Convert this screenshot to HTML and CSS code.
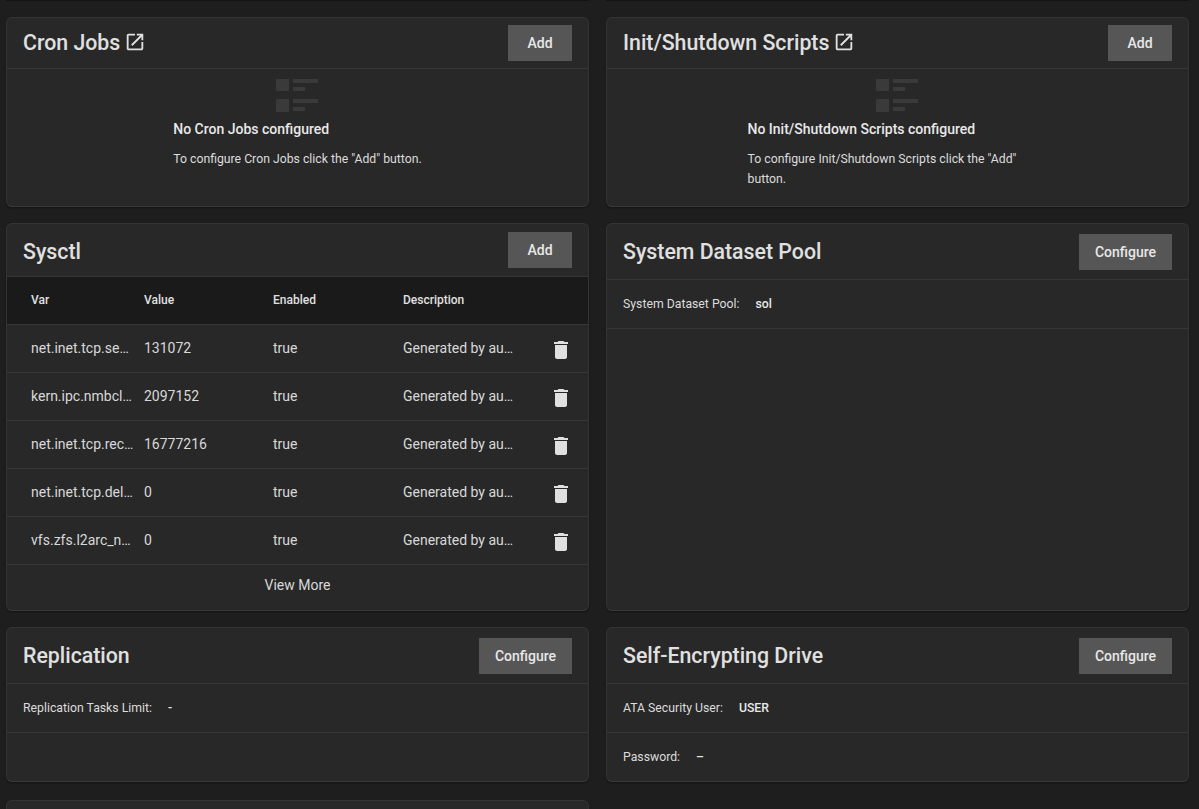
FILE: index.html
```html
<!DOCTYPE html>
<html lang="en">
  <head>
    <meta charset="UTF-8" />
    <meta name="viewport" content="width=device-width, initial-scale=1.0" />
    <title>Advanced Settings</title>
    <link rel="stylesheet" href="styles.css">
  </head>
  <body>
    <div class="top-edge">
      <span></span>
      <span></span>
    </div>
    <div class="cards">
      <section class="card">
        <header class="card-head head-short">
          <h2>Cron Jobs
            <svg class="link-icon" viewBox="0 0 24 24"><path d="M19 19H5V5h7V3H5c-1.11 0-2 .9-2 2v14c0 1.1.89 2 2 2h14c1.1 0 2-.9 2-2v-7h-2v7zM14 3v2h3.59l-9.83 9.83 1.41 1.41L19 6.41V10h2V3h-7z"/></svg>
          </h2>
          <button class="head-btn">Add</button>
        </header>
        <div class="empty">
          <svg class="empty-icon" viewBox="0 0 42 33"><path d="M0 0h13v12H0zM17 0h25v4H17zM17 8h12v4H17zM0 20h13v13H0zM17 20h25v4H17zM17 28h12v4H17z"/></svg>
          <div class="empty-text">
            <h3>No Cron Jobs configured</h3>
            <p>To configure Cron Jobs click the "Add" button.</p>
          </div>
        </div>
      </section>

      <section class="card">
        <header class="card-head head-short">
          <h2>Init/Shutdown Scripts
            <svg class="link-icon" viewBox="0 0 24 24"><path d="M19 19H5V5h7V3H5c-1.11 0-2 .9-2 2v14c0 1.1.89 2 2 2h14c1.1 0 2-.9 2-2v-7h-2v7zM14 3v2h3.59l-9.83 9.83 1.41 1.41L19 6.41V10h2V3h-7z"/></svg>
          </h2>
          <button class="head-btn">Add</button>
        </header>
        <div class="empty">
          <svg class="empty-icon" viewBox="0 0 42 33"><path d="M0 0h13v12H0zM17 0h25v4H17zM17 8h12v4H17zM0 20h13v13H0zM17 20h25v4H17zM17 28h12v4H17z"/></svg>
          <div class="empty-text">
            <h3>No Init/Shutdown Scripts configured</h3>
            <p>To configure Init/Shutdown Scripts click the "Add" button.</p>
          </div>
        </div>
      </section>

      <section class="card">
        <header class="card-head head-sysctl">
          <h2>Sysctl</h2>
          <button class="head-btn">Add</button>
        </header>
        <table class="sysctl-table">
          <thead>
            <tr>
              <th>Var</th>
              <th>Value</th>
              <th>Enabled</th>
              <th>Description</th>
              <th></th>
            </tr>
          </thead>
          <tbody>
            <tr>
              <td>net.inet.tcp.sendbuf_max</td>
              <td>131072</td>
              <td>true</td>
              <td>Generated by autotune</td>
              <td><svg class="trash" viewBox="0 0 24 24"><path d="M19 4h-3.5l-1-1h-5l-1 1H5v2h14V4zM6 19c0 1.1.9 2 2 2h8c1.1 0 2-.9 2-2V7H6v12z"/></svg></td>
            </tr>
            <tr>
              <td>kern.ipc.nmbclusters</td>
              <td>2097152</td>
              <td>true</td>
              <td>Generated by autotune</td>
              <td><svg class="trash" viewBox="0 0 24 24"><path d="M19 4h-3.5l-1-1h-5l-1 1H5v2h14V4zM6 19c0 1.1.9 2 2 2h8c1.1 0 2-.9 2-2V7H6v12z"/></svg></td>
            </tr>
            <tr>
              <td>net.inet.tcp.recvbuf_max</td>
              <td>16777216</td>
              <td>true</td>
              <td>Generated by autotune</td>
              <td><svg class="trash" viewBox="0 0 24 24"><path d="M19 4h-3.5l-1-1h-5l-1 1H5v2h14V4zM6 19c0 1.1.9 2 2 2h8c1.1 0 2-.9 2-2V7H6v12z"/></svg></td>
            </tr>
            <tr>
              <td>net.inet.tcp.delayed_ack</td>
              <td>0</td>
              <td>true</td>
              <td>Generated by autotune</td>
              <td><svg class="trash" viewBox="0 0 24 24"><path d="M19 4h-3.5l-1-1h-5l-1 1H5v2h14V4zM6 19c0 1.1.9 2 2 2h8c1.1 0 2-.9 2-2V7H6v12z"/></svg></td>
            </tr>
            <tr>
              <td>vfs.zfs.l2arc_noprefetch</td>
              <td>0</td>
              <td>true</td>
              <td>Generated by autotune</td>
              <td><svg class="trash" viewBox="0 0 24 24"><path d="M19 4h-3.5l-1-1h-5l-1 1H5v2h14V4zM6 19c0 1.1.9 2 2 2h8c1.1 0 2-.9 2-2V7H6v12z"/></svg></td>
            </tr>
          </tbody>
        </table>
        <div class="view-more">View More</div>
      </section>

      <section class="card">
        <header class="card-head">
          <h2>System Dataset Pool</h2>
          <button class="head-btn">Configure</button>
        </header>
        <div class="info-row"><span>System Dataset Pool:</span><strong>sol</strong></div>
      </section>

      <section class="card">
        <header class="card-head">
          <h2>Replication</h2>
          <button class="head-btn">Configure</button>
        </header>
        <div class="info-row"><span>Replication Tasks Limit:</span><strong>-</strong></div>
      </section>

      <section class="card">
        <header class="card-head">
          <h2>Self-Encrypting Drive</h2>
          <button class="head-btn">Configure</button>
        </header>
        <div class="info-row"><span>ATA Security User:</span><strong>USER</strong></div>
        <div class="info-row no-line"><span>Password:</span><strong>–</strong></div>
      </section>

      <section class="card"></section>
    </div>
  </body>
</html>
```

FILE: styles.css
```css
html,
body {
  height: 100%;
}

body {
  margin: 0;
  padding: 0 6px;
  background-color: #1e1e1e;
  color: #e0e0e0;
  font-family: Roboto, "Liberation Sans", sans-serif;
  font-size: 14px;
  overflow: hidden;
  box-sizing: border-box;
}

/* Bottom edge of the card scrolled out above the page */
.top-edge {
  display: grid;
  grid-template-columns: 583px 583px;
  column-gap: 17px;
  height: 1px;
}

.top-edge span {
  background-color: #141414;
}

.cards {
  display: grid;
  grid-template-columns: 583px 583px;
  grid-template-rows: 190px 388px 155px 60px;
  column-gap: 17px;
  row-gap: 16px;
  margin-top: 16px;
}

.card {
  background-color: #282828;
  border: 1px solid #343434;
  border-bottom-color: #3a3a3a;
  border-radius: 6px;
  box-shadow: 0 1px 2px rgba(0, 0, 0, 0.4);
  box-sizing: border-box;
  overflow: hidden;
}

.card:nth-child(7) {
  margin-top: 2px;
}

.card-head {
  display: flex;
  justify-content: space-between;
  align-items: center;
  height: 55px;
  padding: 0 16px;
  border-bottom: 1px solid #363636;
}

.head-short {
  height: 50px;
  align-items: flex-start;
}

.head-short h2 {
  height: 36px;
  margin-top: 6px;
}

.head-short .head-btn {
  margin-top: 7px;
}

.head-sysctl {
  height: 52px;
  align-items: flex-start;
}

.head-sysctl h2 {
  height: 36px;
  margin-top: 9px;
}

.head-sysctl .head-btn {
  margin-top: 8px;
}

h2 {
  display: flex;
  align-items: center;
  gap: 4px;
  margin: 0;
  font-size: 21.3px;
  font-weight: 500;
  color: #e0e0e0;
}

.link-icon {
  width: 22px;
  height: 22px;
  fill: #e0e0e0;
}

.head-btn {
  min-width: 64px;
  height: 36px;
  padding: 0 16px;
  background-color: #565656;
  color: #e8e8e8;
  border: none;
  font-family: Roboto, "Liberation Sans", sans-serif;
  font-size: 14px;
  font-weight: 500;
}

.empty {
  display: flex;
  flex-direction: column;
  align-items: center;
  padding-top: 10px;
}

.empty-icon {
  width: 42px;
  height: 33px;
  margin-right: 1px;
  fill: #3a3a3a;
}

.empty-text {
  max-width: 300px;
}

.empty-text h3 {
  margin: 7px 0 0;
  font-size: 14px;
  line-height: 20px;
  font-weight: 500;
  color: #e8e8e8;
}

.empty-text p {
  margin: 10px 0 0;
  font-size: 12.25px;
  line-height: 20px;
  color: #dcdcdc;
}

.sysctl-table {
  width: 100%;
  border-collapse: collapse;
  table-layout: fixed;
}

.sysctl-table th,
.sysctl-table td {
  padding: 0 8px 2px 0;
  text-align: left;
  white-space: nowrap;
  overflow: hidden;
  text-overflow: ellipsis;
}

.sysctl-table th {
  height: 45px;
  background-color: #1a1a1a;
  border-bottom: 1px solid #363636;
  font-size: 12px;
  font-weight: 500;
}

.sysctl-table td {
  height: 45px;
  border-bottom: 1px solid #363636;
  color: #d8d8d8;
}

.sysctl-table th:nth-child(1),
.sysctl-table td:nth-child(1) {
  width: 105px; /* Var */
  padding-left: 24px;
}

.sysctl-table th:nth-child(2),
.sysctl-table td:nth-child(2) {
  width: 121px; /* Value */
}

.sysctl-table th:nth-child(3),
.sysctl-table td:nth-child(3) {
  width: 122px; /* Enabled */
}

.sysctl-table th:nth-child(4),
.sysctl-table td:nth-child(4) {
  width: 112px; /* Description */
}

.sysctl-table td:nth-child(5) {
  padding: 0;
  overflow: visible;
}

.trash {
  display: block;
  width: 24px;
  height: 24px;
  margin: 2px 0 0 26px;
  fill: #e0e0e0;
}

.view-more {
  display: flex;
  justify-content: center;
  align-items: center;
  height: 40px;
  color: #d8d8d8;
}

.info-row {
  display: flex;
  gap: 16px;
  align-items: center;
  height: 48px;
  padding: 0 16px;
  border-bottom: 1px solid #363636;
  font-size: 12.25px;
  color: #dcdcdc;
}

.info-row strong {
  font-weight: 500;
  color: #e8e8e8;
}

.no-line {
  border-bottom: none;
}
```
